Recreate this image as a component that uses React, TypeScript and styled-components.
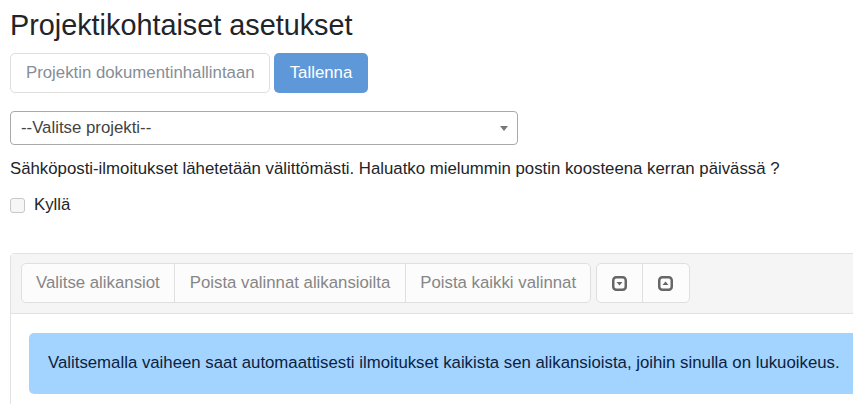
import React from 'react'
import styled, { createGlobalStyle } from 'styled-components'

const GlobalStyle = createGlobalStyle`
	html, body {
		margin: 0;
		padding: 0;
		background: #fff;
		overflow: hidden;
	}
	body {
		font-family: "Liberation Sans", Arial, sans-serif;
		font-size: 16.8px;
		color: #212529;
	}
	* {
		box-sizing: border-box;
	}
`

const TOOL_ACTIONS = ['Valitse alikansiot', 'Poista valinnat alikansioilta', 'Poista kaikki valinnat']

const CaretSquare = ({ up }: { up?: boolean }) => (
	<svg width="15" height="15" viewBox="0 0 15 15">
		<rect x="1.25" y="1.25" width="12.5" height="12.5" rx="3" fill="none" stroke="#666" strokeWidth="2.5" />
		<path d={up ? 'M7.5 5.5 L10.5 9 H4.5 Z' : 'M4.5 6 H10.5 L7.5 9.5 Z'} fill="#666" />
	</svg>
)

export default function App() {
	return (
		<>
			<GlobalStyle />
			<Page>
				<Title>Projektikohtaiset asetukset</Title>
				<SaveRow>
					<NameInput placeholder="Projektin dokumentinhallintaan" />
					<SaveButton>Tallenna</SaveButton>
				</SaveRow>
				<ProjectSelect>
					<span>--Valitse projekti--</span>
					<SelectCaret />
				</ProjectSelect>
				<Info>Sähköposti-ilmoitukset lähetetään välittömästi. Haluatko mielummin postin koosteena kerran päivässä ?</Info>
				<CheckRow>
					<CheckBox />
					<span>Kyllä</span>
				</CheckRow>
				<Card>
					<CardHeader>
						<ButtonGroup>
							{TOOL_ACTIONS.map((action) => (
								<ToolButton key={action}>{action}</ToolButton>
							))}
						</ButtonGroup>
						<ButtonGroup>
							<IconButton>
								<CaretSquare />
							</IconButton>
							<IconButton>
								<CaretSquare up />
							</IconButton>
						</ButtonGroup>
					</CardHeader>
					<CardBody>
						<Alert>Valitsemalla vaiheen saat automaattisesti ilmoitukset kaikista sen alikansioista, joihin sinulla on lukuoikeus.</Alert>
					</CardBody>
				</Card>
			</Page>
		</>
	)
}

const Page = styled.div`
	width: 853px;
	height: 404px;
	padding: 8px 0 0 10px;
	overflow: hidden;
`

const Title = styled.h1`
	margin: 0 0 11px;
	font-size: 28.8px;
	font-weight: 400;
	line-height: 34px;
	color: #212529;
`

const SaveRow = styled.div`
	display: flex;
	gap: 4px;
`

const NameInput = styled.input`
	width: 260px;
	height: 40px;
	padding: 0 15px;
	border: 1px solid #dedede;
	border-radius: 5px;
	background: #fff;
	font: 16.8px "Liberation Sans", Arial, sans-serif;

	&::placeholder {
		color: #868e96;
		opacity: 1;
	}
`

const SaveButton = styled.button`
	width: 94px;
	height: 40px;
	padding: 0;
	border: 0;
	border-radius: 5px;
	background: #5f98d8;
	color: #fff;
	font: 16.8px "Liberation Sans", Arial, sans-serif;
`

const ProjectSelect = styled.div`
	display: flex;
	align-items: center;
	justify-content: space-between;
	width: 508px;
	height: 34px;
	margin-top: 18px;
	padding: 0 10px;
	border: 1px solid #a9a9a9;
	border-radius: 4px;
	color: #444;
`

const SelectCaret = styled.i`
	width: 0;
	height: 0;
	margin-right: -1px;
	border-left: 4px solid transparent;
	border-right: 4px solid transparent;
	border-top: 5px solid #777;
`

const Info = styled.p`
	margin: 8px 0 0;
	line-height: 32px;
`

const CheckRow = styled.label`
	display: flex;
	align-items: center;
	gap: 9px;
	margin-top: 8px;
	line-height: 24px;
`

const CheckBox = styled.i`
	display: block;
	width: 15px;
	height: 15px;
	border: 1px solid #c8c8c8;
	border-radius: 3px;
	background: #f6f6f6;
`

const Card = styled.section`
	width: 900px;
	margin-top: 36px;
	border: 1px solid #e2e2e2;
	border-radius: 4px 0 0 0;
`

const CardHeader = styled.div`
	display: flex;
	gap: 5px;
	height: 60px;
	padding: 9px 10px;
	border-bottom: 1px solid #e2e2e2;
	background: #f5f5f5;
`

const ButtonGroup = styled.div`
	display: flex;
	height: 40px;
	border: 1px solid #dfdfdf;
	border-radius: 5px;
	background: #fcfcfc;
	overflow: hidden;
`

const ToolButton = styled.button`
	height: 38px;
	padding: 0 14px;
	border: 0;
	border-left: 1px solid #dfdfdf;
	background: transparent;
	color: #868686;
	font: 16.8px "Liberation Sans", Arial, sans-serif;

	&:first-child {
		border-left: 0;
	}

	&:nth-child(2) {
		padding: 0 15px;
	}
`

const IconButton = styled(ToolButton)`
	display: flex;
	align-items: center;
	justify-content: center;
	width: 47px;
	padding: 0;

	&:first-child {
		width: 45px;
	}

	&:nth-child(2) {
		padding: 0 1px 0 0;
	}
`

const CardBody = styled.div`
	padding: 19px 18px;
`

const Alert = styled.div`
	height: 61px;
	padding: 0 19px;
	border-radius: 5px;
	background: #a3d3ff;
	color: #0b2240;
	line-height: 60px;
	white-space: nowrap;
`
